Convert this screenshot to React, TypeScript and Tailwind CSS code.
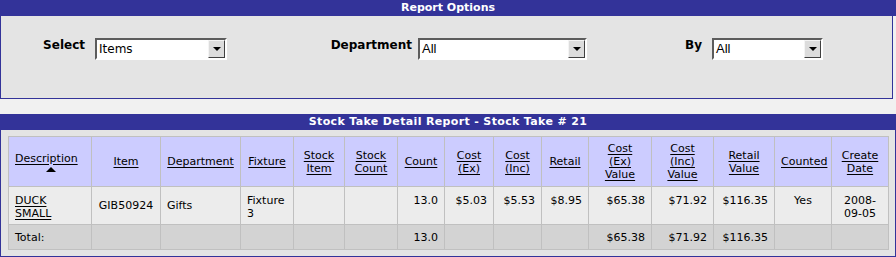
import React from "react";

const navy = "bg-[#333399]";

type SelectProps = { value: string; className: string; textClass: string };

function OldSelect({ value, className, textClass }: SelectProps) {
  return (
    <div
      className={`flex h-[22px] items-stretch border-2 border-t-[#5c5c5c] border-l-[#5c5c5c] border-b-white border-r-white bg-white ${className}`}
    >
      <div className={`flex-1 pl-[2px] leading-[18px] text-black ${textClass}`}>{value}</div>
      <div className="flex w-[17px] items-center justify-center border border-t-[#f4f4f4] border-l-[#f4f4f4] border-b-[#404040] border-r-[#404040] bg-[#dcdcdc]">
        <div className="h-0 w-0 border-x-[4px] border-t-[4px] border-x-transparent border-t-black" />
      </div>
    </div>
  );
}

type Col = {
  label: string[];
  w: string;
  head: string;
};

const cols: Col[] = [
  { label: ["Description"], w: "w-[83px]", head: "text-left" },
  { label: ["Item"], w: "w-[69px]", head: "text-center" },
  { label: ["Department"], w: "w-[80px]", head: "text-center" },
  { label: ["Fixture"], w: "w-[53px]", head: "text-center" },
  { label: ["Stock", "Item"], w: "w-[51px]", head: "text-center" },
  { label: ["Stock", "Count"], w: "w-[53px]", head: "text-center" },
  { label: ["Count"], w: "w-[47px]", head: "text-center" },
  { label: ["Cost", "(Ex)"], w: "w-[49px]", head: "text-center" },
  { label: ["Cost", "(Inc)"], w: "w-[48px]", head: "text-center" },
  { label: ["Retail"], w: "w-[47px]", head: "text-center" },
  { label: ["Cost", "(Ex)", "Value"], w: "w-[63px]", head: "text-center" },
  { label: ["Cost", "(Inc)", "Value"], w: "w-[62px]", head: "text-center" },
  { label: ["Retail", "Value"], w: "w-[61px]", head: "text-center" },
  { label: ["Counted"], w: "w-[57px]", head: "text-center" },
  { label: ["Create", "Date"], w: "w-[57px]", head: "text-center" },
];

const cell = "border border-[#c0c0c0] px-[6px]";

export default function App() {
  return (
    <div className="h-[257px] w-[896px] overflow-hidden bg-[#f1f1f1] font-['DejaVu_Sans',Verdana,sans-serif] text-[11px] text-black">
      {/* report options */}
      <div className="w-[896px]">
        <div className={`${navy} h-[16px] text-center text-[11px] font-bold leading-[16px] text-white`}>
          Report Options
        </div>
        <div className="flex h-[83px] w-[893px] items-start border-x border-b border-[#333399] bg-[#e4e4e4] pt-[22px]">
          <div className="w-[84px] text-right text-[12px] font-bold leading-[15px]">Select</div>
          <OldSelect value="Items" className="ml-[10px] w-[132px]" textClass="text-[12px] font-['DejaVu_Sans',sans-serif]" />
          <div className="w-[185px] text-right text-[12px] font-bold leading-[15px]">Department</div>
          <OldSelect value="All" className="ml-[6px] w-[169px]" textClass="text-[13px] font-['Liberation_Sans',Arial,sans-serif]" />
          <div className="w-[115px] text-right text-[12px] font-bold leading-[15px]">By</div>
          <OldSelect value="All" className="ml-[10px] w-[111px]" textClass="text-[13px] font-['Liberation_Sans',Arial,sans-serif]" />
        </div>
      </div>

      {/* detail report */}
      <div className="mt-[15px] w-[896px] border-x border-b border-[#333399] bg-[#e4e4e4]">
        <div className={`${navy} h-[16px] text-center text-[11px] font-bold leading-[16px] tracking-[0.35px] text-white`}>
          Stock Take Detail Report - Stock Take # 21
        </div>
        <div className="px-[7px] pb-[6px] pt-[6px]">
          <table className="w-[880px] table-fixed border-collapse leading-[13px]">
            <colgroup>
              {cols.map((c) => (
                <col key={c.label.join(" ")} className={c.w} />
              ))}
            </colgroup>
            <thead>
              <tr className="h-[50px] bg-[#ccccff]">
                {cols.map((c, i) => (
                  <th key={c.label.join(" ")} className={`${cell} ${c.head} align-middle font-normal`}>
                    <span className="underline underline-offset-[2px]">
                      {c.label.map((l, j) => (
                        <React.Fragment key={l + j}>
                          {j > 0 && <br />}
                          {l}
                        </React.Fragment>
                      ))}
                    </span>
                    {i === 0 && (
                      <div className="ml-[31px] mt-[2px] h-0 w-0 border-x-[5px] border-b-[5px] border-x-transparent border-b-black" />
                    )}
                  </th>
                ))}
              </tr>
            </thead>
            <tbody>
              <tr className="h-[38px] bg-[#ececec]">
                <td className={`${cell} pt-[7px] align-top`}>
                  <span className="underline underline-offset-[2px]">
                    DUCK
                    <br />
                    SMALL
                  </span>
                </td>
                <td className={`${cell} text-center align-middle`}>GIB50924</td>
                <td className={`${cell} align-middle`}>Gifts</td>
                <td className={`${cell} pt-[7px] align-top`}>
                  Fixture
                  <br />3
                </td>
                <td className={cell}></td>
                <td className={cell}></td>
                <td className={`${cell} pt-[7px] text-right align-top`}>13.0</td>
                <td className={`${cell} pt-[7px] text-right align-top`}>$5.03</td>
                <td className={`${cell} pt-[7px] text-right align-top`}>$5.53</td>
                <td className={`${cell} pt-[7px] text-right align-top`}>$8.95</td>
                <td className={`${cell} pt-[7px] text-right align-top`}>$65.38</td>
                <td className={`${cell} pt-[7px] text-right align-top`}>$71.92</td>
                <td className={`${cell} pt-[7px] text-right align-top`}>$116.35</td>
                <td className={`${cell} pt-[7px] text-center align-top`}>Yes</td>
                <td className={`${cell} pt-[7px] text-center align-top`}>
                  2008-
                  <br />
                  09-05
                </td>
              </tr>
              <tr className="h-[25px] bg-[#d3d3d3]">
                <td className={`${cell} align-middle`}>Total:</td>
                <td className={cell}></td>
                <td className={cell}></td>
                <td className={cell}></td>
                <td className={cell}></td>
                <td className={cell}></td>
                <td className={`${cell} text-right align-middle`}>13.0</td>
                <td className={cell}></td>
                <td className={cell}></td>
                <td className={cell}></td>
                <td className={`${cell} text-right align-middle`}>$65.38</td>
                <td className={`${cell} text-right align-middle`}>$71.92</td>
                <td className={`${cell} text-right align-middle`}>$116.35</td>
                <td className={cell}></td>
                <td className={cell}></td>
              </tr>
            </tbody>
          </table>
        </div>
      </div>
    </div>
  );
}
